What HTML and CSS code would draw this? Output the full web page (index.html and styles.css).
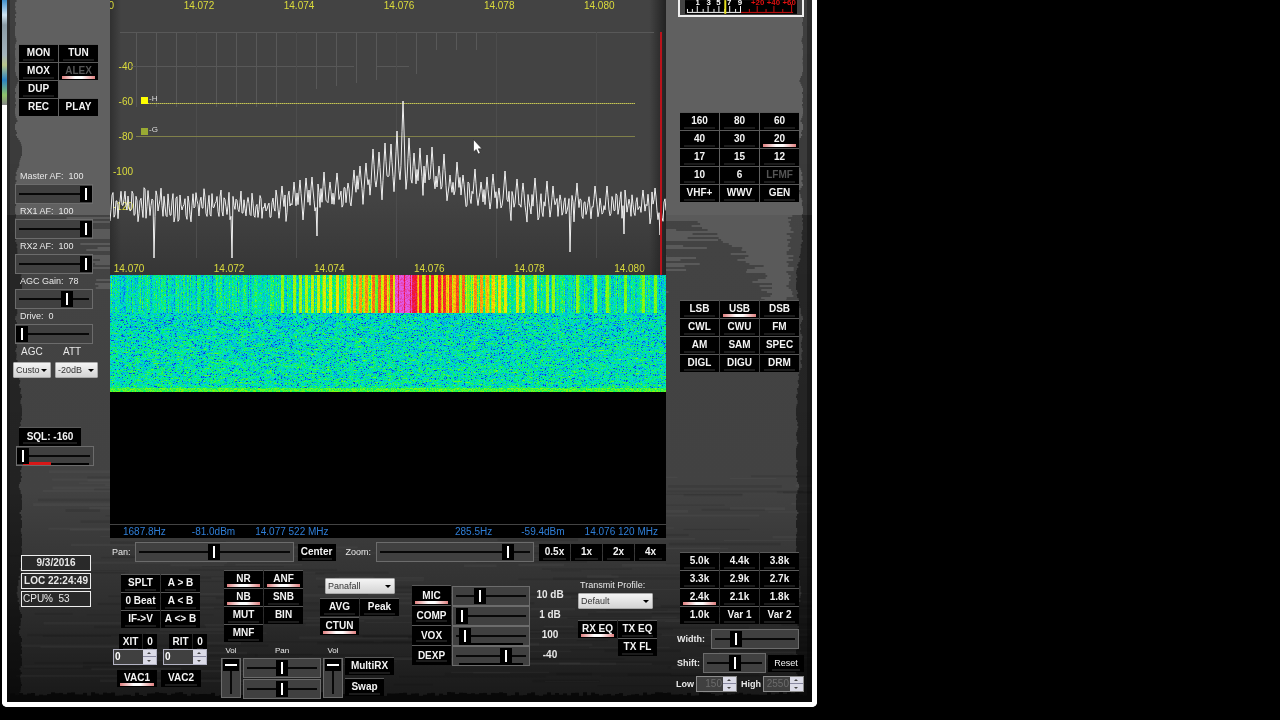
FILE: index.html
```html
<!DOCTYPE html>
<html lang="en">
<head>
    <meta charset="UTF-8">
    <meta name="viewport" content="width=device-width, initial-scale=1.0">
    <title>SDR Console</title>
    <link rel="stylesheet" href="styles.css">
</head>
<body>
    <main class="window">
        <canvas id="texture" class="texture"></canvas>

        <!-- Left side: receive and audio controls -->
        <section class="left">
            <div class="keys two">
                <button>MON</button>
                <button>TUN</button>
                <button>MOX</button>
                <button class="on" disabled>ALEX</button>
                <button>DUP</button>
                <span></span>
                <button class="plain">REC</button>
                <button class="plain">PLAY</button>
            </div>

            <div class="levels">
                <label for="masterAf">Master AF:&nbsp; 100</label>
                <input type="range" id="masterAf" value="100">
                <label for="rx1Af">RX1 AF:&nbsp; 100</label>
                <input type="range" id="rx1Af" value="100">
                <label for="rx2Af">RX2 AF:&nbsp; 100</label>
                <input type="range" id="rx2Af" value="100">
                <label for="agcGain">AGC Gain:&nbsp; 78</label>
                <input type="range" id="agcGain" min="-20" max="120" value="78">
                <label for="drive">Drive:&nbsp; 0</label>
                <input type="range" id="drive" value="0">
            </div>

            <div class="pickers">
                <div>
                    <label for="agc">AGC</label>
                    <div class="pick"><select id="agc"><option>Custo</option></select></div>
                </div>
                <div>
                    <label for="att">ATT</label>
                    <div class="pick"><select id="att"><option>-20dB</option></select></div>
                </div>
            </div>

            <div class="squelch">
                <button id="sqlButton">SQL: -160</button>
                <input type="range" class="sql-level" aria-labelledby="sqlButton" value="0">
            </div>

            <div class="status">
                <div>9/3/2016</div>
                <div>LOC 22:24:49</div>
                <div class="cpu">CPU%&nbsp; 53</div>
            </div>
        </section>

        <!-- Middle: panadapter, waterfall and operating controls -->
        <section class="middle">
            <div class="display">
                <div class="ruler top">
                    <span>14.070</span><span>14.072</span><span>14.074</span><span>14.076</span><span>14.078</span><span>14.080</span>
                </div>
                <div class="decibels">
                    <span>-40</span><span>-60</span><span>-80</span><span>-100</span><span>-120</span>
                </div>
                <canvas id="spectrum" class="spectrum"></canvas>
                <div class="marks"><span class="mark-h">-H</span><span class="mark-g">-G</span></div>
                <div class="ruler bottom">
                    <span>14.070</span><span>14.072</span><span>14.074</span><span>14.076</span><span>14.078</span><span>14.080</span>
                </div>
                <svg class="cursor" width="10" height="16" viewBox="0 0 10 16">
                    <path d="M0.500 0.500V13L3.200 10.500L5.200 15L7.300 14L5.300 9.800H9z" fill="#fff" stroke="#222" stroke-width=".6"/>
                </svg>
            </div>
            <canvas id="waterfall" class="waterfall"></canvas>
            <div class="empty"></div>
            <div class="readout">
                <span>1687.8Hz</span>
                <span>-81.0dBm</span>
                <span>14.077 522 MHz</span>
                <span class="peak">285.5Hz</span>
                <span>-59.4dBm</span>
                <span>14.076 120 MHz</span>
            </div>

            <div class="zoombar">
                <label for="pan">Pan:</label>
                <input type="range" id="pan" value="50">
                <button>Center</button>
                <label for="zoom" class="zoom-label">Zoom:</label>
                <input type="range" id="zoom" value="87">
                <div class="factors">
                    <button>0.5x</button>
                    <button>1x</button>
                    <button>2x</button>
                    <button>4x</button>
                </div>
            </div>

            <div class="controls">
                <div class="vfo">
                    <div class="keys two">
                        <button>SPLT</button>
                        <button>A &gt; B</button>
                        <button>0 Beat</button>
                        <button>A &lt; B</button>
                        <button>IF-&gt;V</button>
                        <button>A &lt;&gt; B</button>
                    </div>
                    <div class="offsets">
                        <div>
                            <div class="offset-head"><button id="xitButton">XIT</button><button aria-label="Clear XIT">0</button></div>
                            <div class="spin"><input type="text" aria-labelledby="xitButton" value="0"><i></i></div>
                        </div>
                        <div>
                            <div class="offset-head"><button id="ritButton">RIT</button><button aria-label="Clear RIT">0</button></div>
                            <div class="spin"><input type="text" aria-labelledby="ritButton" value="0"><i></i></div>
                        </div>
                    </div>
                    <div class="vac">
                        <button class="on">VAC1</button>
                        <button>VAC2</button>
                    </div>
                </div>

                <div class="dsp">
                    <div class="dsp-top">
                        <div class="keys two">
                            <button class="on">NR</button>
                            <button class="on">ANF</button>
                            <button class="on">NB</button>
                            <button>SNB</button>
                            <button>MUT</button>
                            <button>BIN</button>
                            <button>MNF</button>
                        </div>
                        <div class="view">
                            <div class="pick"><select aria-label="Display mode"><option>Panafall</option></select></div>
                            <div class="keys two">
                                <button>AVG</button>
                                <button>Peak</button>
                                <button class="on">CTUN</button>
                            </div>
                        </div>
                    </div>
                    <div class="mixer">
                        <div class="vol">
                            <label for="vol1">Vol</label>
                            <input type="range" id="vol1" class="vertical" value="100">
                        </div>
                        <div class="pans">
                            <label for="pan1">Pan</label>
                            <input type="range" id="pan1" value="50">
                            <input type="range" id="pan2" aria-label="Second pan" value="50">
                        </div>
                        <div class="vol">
                            <label for="vol2">Vol</label>
                            <input type="range" id="vol2" class="vertical" value="100">
                        </div>
                        <div class="multi">
                            <button>MultiRX</button>
                            <button class="swap">Swap</button>
                        </div>
                    </div>
                </div>

                <div class="audio">
                    <button id="mic" class="on">MIC</button>
                    <input type="range" aria-labelledby="mic" value="33">
                    <output>10 dB</output>
                    <button id="comp">COMP</button>
                    <input type="range" aria-labelledby="comp" value="5">
                    <output>1 dB</output>
                    <button id="vox">VOX</button>
                    <input type="range" class="metered" aria-labelledby="vox" value="10">
                    <output>100</output>
                    <button id="dexp">DEXP</button>
                    <input type="range" class="metered" aria-labelledby="dexp" value="73">
                    <output>-40</output>
                </div>

                <div class="transmit">
                    <label for="profile">Transmit Profile:</label>
                    <div class="pick"><select id="profile"><option>Default</option></select></div>
                    <div class="keys two">
                        <button class="on">RX EQ</button>
                        <button>TX EQ</button>
                        <span></span>
                        <button>TX FL</button>
                    </div>
                </div>
            </div>
        </section>

        <!-- Right side: band, mode and filter -->
        <section class="right">
            <div class="meter">
                <svg viewBox="0 0 114 14" height="14">
                    <rect width="114" height="14" fill="#000"/>
                    <g class="meter-text" fill="#fff">
                        <text x="13" y="5">1</text><text x="24" y="5">3</text><text x="34" y="5">5</text><text x="45" y="5">7</text><text x="56" y="5">9</text>
                    </g>
                    <g class="meter-text" fill="#e01010">
                        <text x="74" y="5">+20</text><text x="90" y="5">+40</text><text x="106" y="5">+60</text>
                    </g>
                    <path d="M2 12.500H57M2.500 12V9M7.500 12V9M12.500 12V6M18.500 12V9M23.500 12V6M29.500 12V9M34.500 12V6M40.500 12V9M45.500 12V6M51.500 12V9M56.500 12V6" stroke="#fff"/>
                    <path d="M57 12.500H110M65.500 12V9M73.500 12V6M82.500 12V9M90.500 12V6M99.500 12V9M108.500 12V4" stroke="#d01010"/>
                    <path d="M41 0V14" stroke="#e8e020" stroke-width="2"/>
                </svg>
            </div>

            <div class="keys three bands">
                <button>160</button>
                <button>80</button>
                <button>60</button>
                <button>40</button>
                <button>30</button>
                <button class="on">20</button>
                <button>17</button>
                <button>15</button>
                <button>12</button>
                <button>10</button>
                <button>6</button>
                <button disabled>LFMF</button>
                <button>VHF+</button>
                <button>WWV</button>
                <button>GEN</button>
            </div>

            <div class="keys three modes">
                <button>LSB</button>
                <button class="on">USB</button>
                <button>DSB</button>
                <button>CWL</button>
                <button>CWU</button>
                <button>FM</button>
                <button>AM</button>
                <button>SAM</button>
                <button>SPEC</button>
                <button>DIGL</button>
                <button>DIGU</button>
                <button>DRM</button>
            </div>

            <div class="keys three filters">
                <button>5.0k</button>
                <button>4.4k</button>
                <button>3.8k</button>
                <button>3.3k</button>
                <button>2.9k</button>
                <button>2.7k</button>
                <button class="on">2.4k</button>
                <button>2.1k</button>
                <button>1.8k</button>
                <button>1.0k</button>
                <button>Var 1</button>
                <button>Var 2</button>
            </div>

            <div class="filter-row width-row">
                <label for="width">Width:</label>
                <input type="range" id="width" value="24">
            </div>
            <div class="filter-row shift-row">
                <label for="shift">Shift:</label>
                <input type="range" id="shift" value="50">
                <button class="reset">Reset</button>
            </div>
            <div class="filter-row limits">
                <label for="low">Low</label>
                <div class="spin off"><input type="text" id="low" value="150" disabled><i></i></div>
                <label for="high">High</label>
                <div class="spin off"><input type="text" id="high" value="2550" disabled><i></i></div>
            </div>
        </section>
    </main>
    <script src="script.js"></script>
</body>
</html>
```
FILE: styles.css
```css
* {
    box-sizing: border-box;
}
body {
    margin: 0;
    background: #000;
    color: #e8e8e8;
    font-family: "Liberation Sans", Arial, sans-serif;
    font-size: 9px;
    line-height: 15px;
}
.window {
    position: relative;
    display: grid;
    grid-template-columns: 103px 1fr 146px;
    max-width: 815px;
    margin-left: 2px;
    border: 5px solid #fff;
    border-top: 0;
    border-radius: 0 0 5px 5px;
    background: #333;
}
/* the desktop showing past the top left corner */
.window::before {
    content: "";
    position: absolute;
    left: -5px;
    top: 0;
    width: 5px;
    height: 105px;
    background: linear-gradient(#3f90cc, #cfe4f2 15px, #8a9ba5 25px, #a4b4bd 55px, #b9c58a 65px, #2b84c4 80px, #8fc26a 95px, #888);
}
.texture {
    position: absolute;
    left: 0;
    top: 0;
    width: 100%;
    height: 100%;
}
.left, .middle, .right {
    position: relative;
    min-width: 0;
}

/* Buttons */
button {
    height: 17px;
    padding: 0 0 1px;
    border: 0;
    color: #f4f4f4;
    background: linear-gradient(#1c1c1c, #1c1c1c) 50% 14px / calc(100% - 8px) 2px no-repeat #000;
    font: bold 10px/14px "Liberation Sans", Arial, sans-serif;
    white-space: nowrap;
    cursor: pointer;
}
button.on {
    background: linear-gradient(90deg, #e08080, #fff 40%, #fff 60%, #e08080) 50% 13px / calc(100% - 6px) 3px no-repeat #000;
}
button.plain {
    background: #000;
}
button:disabled {
    color: #555;
}
.keys {
    display: grid;
    grid-auto-rows: 17px;
    gap: 1px;
}
.keys button {
    box-shadow: 0 -1px #5a5a5a;
}
.two {
    grid-template-columns: 39px 39px;
}
.three {
    grid-template-columns: repeat(3, 39px);
}

/* Sliders */
input[type="range"] {
    appearance: none;
    display: block;
    width: 78px;
    min-width: 0;
    height: 20px;
    margin: 0;
    border: 1px solid #6c6c6c;
    background: linear-gradient(#080808, #080808) 50% 50% / calc(100% - 6px) 2px no-repeat #404040;
}
input[type="range"]::-webkit-slider-thumb {
    appearance: none;
    width: 12px;
    height: 16px;
    background: linear-gradient(#fff, #fff) 50% 50% / 2px 12px no-repeat #000;
}
input[type="range"].sql-level {
    background: linear-gradient(#d81818, #d81818) 6px 100% / 28px 3px no-repeat,
        linear-gradient(#000, #000) 6px 100% / 66px 2px no-repeat,
        linear-gradient(#080808, #080808) 50% 50% / calc(100% - 6px) 2px no-repeat #404040;
}
input[type="range"].metered {
    background: linear-gradient(#000, #000) 50% 100% / calc(100% - 12px) 2px no-repeat,
        linear-gradient(#080808, #080808) 50% 50% / calc(100% - 6px) 2px no-repeat #404040;
}
input[type="range"].vertical {
    writing-mode: vertical-lr;
    direction: rtl;
    width: 20px;
    height: 40px;
    background: linear-gradient(#080808, #080808) 50% 50% / 2px calc(100% - 6px) no-repeat #404040;
}
input[type="range"].vertical::-webkit-slider-thumb {
    width: 16px;
    height: 12px;
    background: linear-gradient(#fff, #fff) 50% 50% / 12px 2px no-repeat #000;
}

/* Drop-downs and number boxes */
.pick {
    position: relative;
}
.pick::after {
    content: "";
    position: absolute;
    right: 4px;
    top: 7px;
    border: 3px solid transparent;
    border-top-color: #000;
    pointer-events: none;
}
select {
    appearance: none;
    display: block;
    width: 100%;
    height: 16px;
    padding: 0 0 0 2px;
    border: 1px solid #aaa;
    border-radius: 1px;
    background: linear-gradient(#f4f4f4, #d4d4d4);
    color: #333;
    font: 9px/14px "Liberation Sans", Arial, sans-serif;
}
.spin {
    display: flex;
    width: 44px;
    height: 16px;
    border: 1px solid #b4b4c4;
    background: #404040;
}
.spin input {
    flex: 1;
    min-width: 0;
    padding: 0 1px;
    border: 0;
    background: none;
    color: #fff;
    font: bold 10px/14px "Liberation Sans", Arial, sans-serif;
}
.spin i {
    position: relative;
    width: 13px;
    background: linear-gradient(#dcdce8 6px, #8888a0 6px, #8888a0 7px, #dcdce8 7px);
}
.spin i::before, .spin i::after {
    content: "";
    position: absolute;
    left: 4px;
    border: 2px solid transparent;
}
.spin i::before {
    top: 0;
    border-bottom-color: #444;
}
.spin i::after {
    bottom: 0;
    border-top-color: #444;
}
.spin.off {
    width: 41px;
    border-color: #8c8c8c;
}
.spin.off input {
    color: #6c6c6c;
    font-weight: normal;
    text-align: right;
}

/* Left side */
.left {
    padding: 45px 4px 0 12px;
}
.levels {
    width: 78px;
    margin: 53px 0 0 -4px;
}
.levels label {
    display: block;
    padding-left: 5px;
}
.pickers {
    display: grid;
    grid-template-columns: 38px 43px;
    gap: 4px;
    margin: 0 0 0 -6px;
}
.pickers label {
    display: block;
    height: 18px;
    padding-left: 8px;
    font-size: 10px;
}
.squelch {
    margin-top: 50px;
}
.squelch button {
    display: block;
    width: 62px;
    height: 18px;
    box-shadow: 0 -1px #5a5a5a;
}
.squelch input {
    margin-left: -3px;
}
.status {
    display: grid;
    gap: 2px;
    width: 70px;
    margin: 89px 0 0 2px;
}
.status div {
    height: 16px;
    border: 1px solid #eee;
    background: #292929;
    font-size: 10px;
    font-weight: bold;
    line-height: 14px;
    text-align: center;
    white-space: nowrap;
}
.status .cpu {
    padding-left: 1px;
    font-weight: normal;
    text-align: left;
}

/* Spectrum */
.display {
    position: relative;
    height: 275px;
    overflow: hidden;
    color: #dcdc3c;
    font-size: 10px;
}
.ruler {
    display: grid;
    grid-template-columns: repeat(6, 18%);
    width: 100%;
    line-height: 12px;
    text-align: center;
}
.ruler.top {
    margin-left: -11%;
}
.ruler.bottom {
    margin: 251px 0 0 -31px;
}
.decibels {
    position: absolute;
    left: 0;
    top: 49px;
    display: grid;
    grid-auto-rows: 35px;
    width: 23px;
    line-height: 35px;
    text-align: right;
}
.marks {
    position: absolute;
    left: 31px;
    top: 95px;
    display: grid;
    grid-auto-rows: 31px;
    color: #ddd;
    font-size: 8px;
    line-height: 8px;
}
.marks span {
    padding-left: 8px;
    background: linear-gradient(#ff0, #ff0) 0 2px / 7px 7px no-repeat;
}
.marks .mark-g {
    background: linear-gradient(#9a3, #9a3) 0 2px / 7px 7px no-repeat;
}
.spectrum {
    position: absolute;
    left: 0;
    top: 0;
    width: 100%;
    height: 275px;
}
.cursor {
    position: absolute;
    left: 363px;
    top: 139px;
}
.waterfall {
    display: block;
    width: 100%;
    height: 117px;
    image-rendering: pixelated;
}
.empty {
    height: 132px;
    background: #000;
}
.readout {
    display: flex;
    gap: 26px;
    height: 14px;
    padding: 0 8px 0 13px;
    border-top: 1px solid #444;
    background: #000;
    color: #2f7fd8;
    font-size: 10px;
    line-height: 13px;
    white-space: nowrap;
}
.readout span:nth-child(2), .readout span:nth-child(5) {
    margin-right: -6px;
}
.readout .peak {
    margin-left: auto;
    margin-right: 3px;
}

/* Pan and zoom */
.zoombar {
    display: flex;
    align-items: center;
    height: 20px;
    margin-top: 4px;
    padding-left: 2px;
}
.zoombar input[type="range"] {
    flex: 1;
}
.zoombar label {
    width: 23px;
}
.zoombar > button {
    width: 38px;
    margin-left: 4px;
}
.zoombar .zoom-label {
    width: 30px;
    margin-left: 10px;
}
.factors {
    display: grid;
    grid-template-columns: repeat(4, 31px);
    gap: 1px;
    margin-left: 5px;
}

/* Operating controls */
.controls {
    display: flex;
    height: 140px;
    padding-left: 3px;
}
.vfo {
    width: 108px;
    padding-top: 13px;
}
.vfo .keys {
    padding-left: 8px;
}
.offsets {
    display: flex;
    gap: 6px;
    margin-top: 6px;
}
.offset-head {
    display: flex;
    gap: 1px;
    padding-left: 6px;
}
.offset-head button {
    height: 15px;
    width: 23px;
    padding: 0;
}
.offset-head button + button {
    width: 14px;
}
.vac {
    display: flex;
    gap: 4px;
    margin: 5px 0 0 4px;
}
.vac button {
    width: 40px;
}
.dsp {
    width: 191px;
}
.dsp-top {
    display: flex;
    gap: 17px;
    padding: 9px 0 0 3px;
}
.view .pick {
    width: 70px;
    margin: 7px 0 5px 5px;
}
.view .keys {
    grid-auto-rows: 18px;
}
.mixer {
    display: flex;
    gap: 2px;
    margin-top: 1px;
    font-size: 8px;
}
.mixer label {
    display: block;
    height: 15px;
    text-align: center;
}
.pans input + input {
    margin-top: 1px;
}
.multi {
    display: grid;
    gap: 4px;
    align-content: start;
    padding-top: 15px;
}
.multi button {
    width: 49px;
    box-shadow: 0 -1px #5a5a5a;
}
.multi .swap {
    width: 39px;
}
.audio {
    display: grid;
    grid-template-columns: 40px 78px 40px;
    grid-auto-rows: 20px;
    align-content: start;
    width: 166px;
    padding-top: 24px;
}
.audio button {
    width: 39px;
    height: 19px;
    padding-bottom: 0;
    box-shadow: 0 -1px #5a5a5a;
}
.audio button.on {
    background-position: 50% 15px;
}
.audio output {
    font-size: 10px;
    font-weight: bold;
    text-align: center;
    line-height: 18px;
}
.transmit {
    width: 80px;
    padding-top: 16px;
}
.transmit label {
    display: block;
    padding-left: 2px;
    white-space: nowrap;
}
.transmit .pick {
    width: 75px;
    margin-bottom: 12px;
}

/* Right side */
.right {
    padding-left: 14px;
}
.meter {
    width: 126px;
    height: 17px;
    margin-left: -2px;
    padding: 0 5px;
    border: 2px solid #eee;
    border-top: 0;
    background: #444;
}
.meter svg {
    display: block;
    width: 100%;
}
.meter-text {
    font-size: 8px;
    font-weight: bold;
    text-anchor: middle;
}
.bands {
    margin-top: 96px;
}
.modes {
    margin-top: 99px;
}
.filters {
    margin-top: 181px;
}
.filter-row {
    display: flex;
    align-items: center;
    height: 20px;
    margin-left: -3px;
    font-weight: bold;
}
.width-row {
    margin-top: 5px;
}
.width-row label {
    width: 34px;
}
.filter-row input[type="range"] {
    width: 88px;
}
.shift-row {
    margin-top: 4px;
}
.shift-row label {
    width: 26px;
}
.shift-row input[type="range"] {
    width: 63px;
}
.filter-row .reset {
    width: 36px;
    margin-left: 2px;
    font-size: 9px;
    font-weight: normal;
}
.limits {
    height: 18px;
    margin: 2px 0 0 -4px;
}
.limits label {
    width: 20px;
}
.limits .spin + label {
    width: 22px;
    margin-left: 4px;
}
```
FILE: script.js
```javascript
// Repeatable random numbers so the display looks the same on each load
let seed = 7;
function random() {
    seed = (seed * 16807) % 2147483647;
    return seed / 2147483647;
}

// Get a canvas ready at its size on the page
function prepare(id) {
    const canvas = document.getElementById(id);
    canvas.width = canvas.clientWidth;
    canvas.height = canvas.clientHeight;
    return canvas.getContext('2d');
}

// Carriers in the received signal: [x, y of the top]
const peaks = [
    [172, 186], [184, 182], [190, 180], [196, 178], [202, 177], [208, 184], [214, 172], [220, 182], [227, 173],
    [238, 183], [244, 170], [250, 166], [256, 163], [263, 149], [269, 152], [275, 143], [281, 144], [287, 131],
    [293, 101], [299, 138], [304, 153], [310, 148], [317, 155], [322, 147], [329, 166], [334, 154], [340, 175],
    [347, 162], [353, 175], [365, 169], [371, 182], [377, 177], [383, 174], [389, 188], [395, 171], [407, 179],
    [413, 183], [425, 178], [437, 181], [443, 186], [467, 183], [485, 186], [497, 186], [515, 190], [533, 190], [545, 188]
];
const dips = { 44: 258, 122: 258, 207: 236, 460: 252, 514: 234, 550: 235 };

// Brushed metal behind all the panels
function drawTexture() {
    const ctx = prepare('texture');
    const w = ctx.canvas.width;
    const h = ctx.canvas.height;
    const base = ctx.createLinearGradient(0, 0, 0, h);
    base.addColorStop(0, '#464646');
    base.addColorStop(0.34, '#434343');
    base.addColorStop(0.7, '#424242');
    base.addColorStop(0.85, '#303030');
    base.addColorStop(1, '#181818');
    ctx.fillStyle = base;
    ctx.fillRect(0, 0, w, h);

    // lighter upper part of both side panels, breaking up into strokes
    ctx.fillStyle = '#606060';
    ctx.fillRect(0, 0, 103, 215);
    ctx.fillRect(w - 146, 0, 146, 215);
    let reach = 100;
    for (let y = 215; y < 300; y += 2) {
        const left = (300 - y) / 85;
        ctx.fillStyle = '#5a5a5a';
        if (random() < left * 0.7) {
            ctx.fillRect(w - 146, y, random() * 80 * left, 2);
        }
        // the light patch narrows toward the right as it goes down
        reach = Math.max(22, 25 + 95 * left * left + (random() - 0.5) * 24);
        ctx.fillRect(w - 18 - reach, y, reach - random() * 8, 2);
        if (y < 290 && random() < 0.6) {
            const length = 10 + random() * 50 * left;
            ctx.fillRect(103 - length, y, length, 2);
        }
    }

    // brush streaks lower down
    for (let i = 0; i < 300; i++) {
        ctx.fillStyle = i % 2 ? 'rgba(255,255,255,.03)' : 'rgba(0,0,0,.09)';
        ctx.fillRect(random() * w, 470 + random() * 215, 30 + random() * 120, 1 + random() * 2);
    }

    // worn dark edges, darker toward the bottom
    let edge = 11;
    for (let y = 0; y < h; y += 2) {
        edge = Math.max(8, Math.min(15, edge + (random() - 0.5) * 3));
        ctx.fillStyle = 'rgba(0,0,0,' + (0.34 + 0.2 * y / h) + ')';
        ctx.fillRect(0, y, edge, 2);
        ctx.fillRect(w - edge - 1, y, edge + 1, 2);
        ctx.fillStyle = 'rgba(0,0,0,.3)';
        ctx.fillRect(w - 5, y, 5, 2);
        ctx.fillRect(0, y, 3, 2);
    }
    for (let x = 0; x < w; x += 4) {
        ctx.fillStyle = '#080808';
        ctx.fillRect(x, h - 6 - random() * 4, 4, 14);
    }

    // shade around the spectrum
    const right = w - 146;
    const shade = ctx.createLinearGradient(103, 0, right, 0);
    shade.addColorStop(0, '#303030');
    shade.addColorStop(0.02, '#434343');
    shade.addColorStop(0.97, '#434343');
    shade.addColorStop(1, '#222');
    ctx.fillStyle = shade;
    ctx.fillRect(103, 0, right - 103, 275);
    const fade = ctx.createLinearGradient(0, 200, 0, 275);
    fade.addColorStop(0, 'rgba(34,34,34,0)');
    fade.addColorStop(1, 'rgba(34,34,34,.4)');
    ctx.fillStyle = fade;
    ctx.fillRect(103, 200, right - 103, 75);
}

// Grid, marker lines and trace
function drawSpectrum() {
    const ctx = prepare('spectrum');
    const w = ctx.canvas.width;
    const k = w / 556;

    ctx.fillStyle = '#585858';
    ctx.fillRect(10, 32, 534 * k, 1);
    ctx.fillRect(22, 66, 222 * k, 1);
    ctx.fillRect(267 * k, 66, 32 * k, 1);
    for (let i = 0; i < 19; i++) {
        const length = i < 8 ? 75 : i < 15 ? 60 - (i - 8) * 3 : 18;
        ctx.fillRect(Math.round((26 + i * 20) * k), 32, 1, length);
    }
    ctx.fillStyle = '#4c4c4c';
    for (let i = 0; i < 5; i++) {
        ctx.fillRect(Math.round((86 + i * 100) * k), 32, 1, 226);
    }

    ctx.fillStyle = 'rgba(180,180,70,.65)';
    ctx.fillRect(38, 103, 487 * k, 1);
    ctx.fillStyle = '#c4c458';
    for (let x = 38; x < 525 * k; x += 2) {
        ctx.fillRect(x, 103, 1, 1);
    }
    ctx.fillStyle = '#80804a';
    ctx.fillRect(26, 136, 499 * k, 1);

    // build the trace, higher around the carriers
    ctx.beginPath();
    for (let x = 0; x <= 556; x++) {
        const hill = 24 * Math.exp(-Math.pow((x - 295) / 65, 2));
        const down = x % 4 < 2;
        let y = 206 - hill + (down ? 1 : -1) * random() * 15 + (random() - 0.5) * 8;
        for (const peak of peaks) {
            const d = Math.abs(x - peak[0]);
            if (d < 3) {
                const floor = 218 - hill + (random() - 0.5) * 12;
                y = peak[1] + (floor - peak[1]) * d / 3;
            }
        }
        if (dips[x]) {
            y = dips[x];
        }
        ctx.lineTo(x * k, y);
    }
    ctx.strokeStyle = '#f0f0f0';
    ctx.lineWidth = 1;
    ctx.lineJoin = 'round';
    ctx.stroke();

    ctx.fillStyle = '#b8141c';
    ctx.fillRect(w - 6, 32, 2, 243);
}

// Colour of one waterfall cell, 0 is weak and 1 is strong
const scale = [[10, 60, 220], [0, 150, 240], [0, 225, 205], [0, 240, 110], [120, 250, 20], [250, 230, 0], [250, 120, 20], [240, 10, 50], [225, 90, 230]];
function colour(value) {
    const v = Math.max(0, Math.min(0.999, value)) * (scale.length - 1);
    const i = Math.floor(v);
    const t = v - i;
    return scale[i].map((c, n) => c + (scale[i + 1][n] - c) * t);
}

function drawWaterfall() {
    const canvas = document.getElementById('waterfall');
    canvas.width = 556;
    canvas.height = 117;
    const ctx = canvas.getContext('2d');
    const image = ctx.createImageData(556, 117);

    const columns = [];
    for (let x = 0; x < 556; x++) {
        const hill = Math.exp(-Math.pow((x - 310) / 80, 2));
        let strength = 0.28 + (random() - 0.5) * 0.22 + 0.36 * hill;
        for (const peak of peaks) {
            if (Math.abs(x - peak[0]) < 2) {
                strength = 0.5 + 0.36 * hill;
            }
        }
        if (x > 284 && x < 302) {
            strength = x % 6 ? 0.99 : 0.9;
        } else if (x > 301 && x < 307) {
            strength = 0.88;
        }
        columns.push(strength);
    }

    for (let y = 0; y < 117; y++) {
        let drift = 0;
        for (let x = 0; x < 556; x++) {
            let value;
            if (y < 38) {
                const strong = columns[x] > 0.45;
                value = columns[x] + (random() - 0.5) * (strong ? 0.08 : 0.26);
            } else {
                // neighbouring cells keep some of the same level
                drift = drift * 0.5 + (random() - 0.5) * 0.24;
                value = 0.27 + (y - 38) * 0.0006 + drift;
                if (random() < 0.12) {
                    value -= 0.22;
                }
                if (y > 112) {
                    value = 0.37 + random() * 0.15;
                }
            }
            const rgb = colour(value);
            const at = (y * 556 + x) * 4;
            image.data[at] = rgb[0];
            image.data[at + 1] = rgb[1];
            image.data[at + 2] = rgb[2];
            image.data[at + 3] = 255;
        }
    }
    ctx.putImageData(image, 0, 0);
}

function drawAll() {
    seed = 7;
    drawTexture();
    drawSpectrum();
    drawWaterfall();
}

window.addEventListener('resize', drawAll);
drawAll();
```
